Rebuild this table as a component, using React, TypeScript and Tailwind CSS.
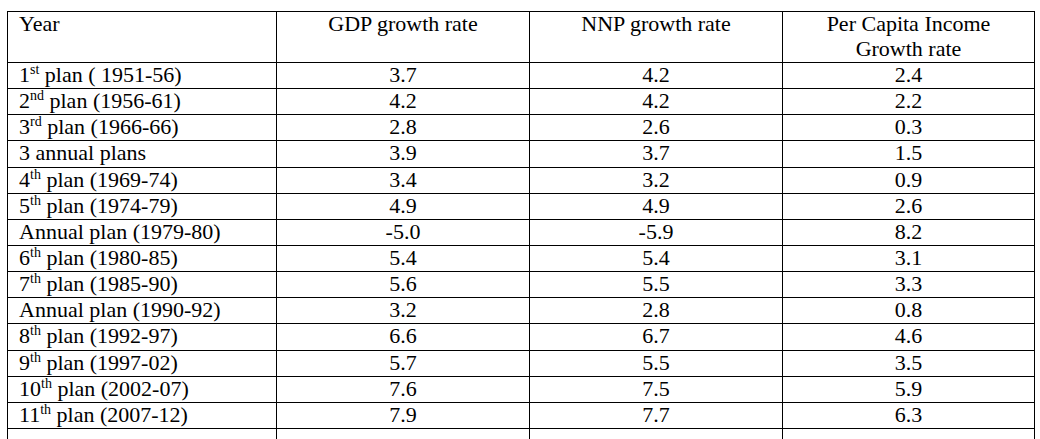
import React from 'react';

type Row = {
  n?: string;
  sup?: string;
  label: string;
  gdp: string;
  nnp: string;
  pci: string;
};

const rows: Row[] = [
  { n: '1', sup: 'st', label: ' plan ( 1951-56)', gdp: '3.7', nnp: '4.2', pci: '2.4' },
  { n: '2', sup: 'nd', label: ' plan (1956-61)', gdp: '4.2', nnp: '4.2', pci: '2.2' },
  { n: '3', sup: 'rd', label: ' plan (1966-66)', gdp: '2.8', nnp: '2.6', pci: '0.3' },
  { label: '3 annual plans', gdp: '3.9', nnp: '3.7', pci: '1.5' },
  { n: '4', sup: 'th', label: ' plan (1969-74)', gdp: '3.4', nnp: '3.2', pci: '0.9' },
  { n: '5', sup: 'th', label: ' plan (1974-79)', gdp: '4.9', nnp: '4.9', pci: '2.6' },
  { label: 'Annual plan (1979-80)', gdp: '-5.0', nnp: '-5.9', pci: '8.2' },
  { n: '6', sup: 'th', label: ' plan (1980-85)', gdp: '5.4', nnp: '5.4', pci: '3.1' },
  { n: '7', sup: 'th', label: ' plan (1985-90)', gdp: '5.6', nnp: '5.5', pci: '3.3' },
  { label: 'Annual plan (1990-92)', gdp: '3.2', nnp: '2.8', pci: '0.8' },
  { n: '8', sup: 'th', label: ' plan (1992-97)', gdp: '6.6', nnp: '6.7', pci: '4.6' },
  { n: '9', sup: 'th', label: ' plan (1997-02)', gdp: '5.7', nnp: '5.5', pci: '3.5' },
  { n: '10', sup: 'th', label: ' plan (2002-07)', gdp: '7.6', nnp: '7.5', pci: '5.9' },
  { n: '11', sup: 'th', label: ' plan (2007-12)', gdp: '7.9', nnp: '7.7', pci: '6.3' },
];

const cell = 'border border-black p-0 align-top';

const App: React.FC = () => {
  return (
    <div className="w-[1040px] h-[439px] overflow-hidden bg-white pt-[11px] pl-[7px] text-black font-[family-name:'Liberation_Serif','Times_New_Roman',serif] text-[22px] leading-[24.5px]">
      <table className="border-collapse table-fixed w-[1027px]">
        <colgroup>
          <col className="w-[269px]" />
          <col className="w-[253px]" />
          <col className="w-[253px]" />
          <col className="w-[252px]" />
        </colgroup>
        <thead>
          <tr className="h-[51px]">
            <th className={`${cell} text-left font-normal pl-[11px]`}>Year</th>
            <th className={`${cell} text-center font-normal`}>GDP growth rate</th>
            <th className={`${cell} text-center font-normal`}>NNP growth rate</th>
            <th className={`${cell} text-center font-normal`}>
              Per Capita Income
              <br />
              Growth rate
            </th>
          </tr>
        </thead>
        <tbody>
          {rows.map((r, i) => (
            <tr key={i} className="h-[26.15px]">
              <td className={`${cell} pl-[11px] whitespace-nowrap`}>
                {r.n}
                {r.sup && <sup className="text-[14px] top-[-8px]">{r.sup}</sup>}
                {r.label}
              </td>
              <td className={`${cell} text-center`}>{r.gdp}</td>
              <td className={`${cell} text-center`}>{r.nnp}</td>
              <td className={`${cell} text-center`}>{r.pci}</td>
            </tr>
          ))}
          <tr className="h-[26px]">
            <td className={cell}></td>
            <td className={cell}></td>
            <td className={cell}></td>
            <td className={cell}></td>
          </tr>
        </tbody>
      </table>
    </div>
  );
};

export default App;
